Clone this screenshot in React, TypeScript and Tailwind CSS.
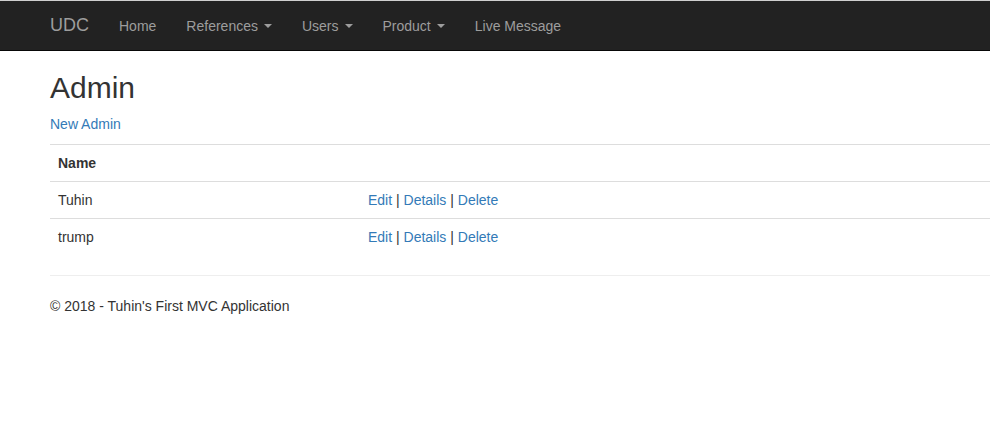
const font = "font-['Liberation_Sans',Arial,sans-serif]";

function Caret() {
  return (
    <span className="ml-[6px] inline-block h-0 w-0 border-x-[4px] border-t-[4px] border-x-transparent border-t-[#9d9d9d] align-middle" />
  );
}

const navItems = [
  { label: "Home" },
  { label: "References", caret: true },
  { label: "Users", caret: true },
  { label: "Product", caret: true },
  { label: "Live Message" },
];

const admins = ["Tuhin", "trump"];

export default function App() {
  return (
    <div className={`${font} min-h-screen w-full overflow-hidden bg-white text-[14px] leading-[20px] text-[#333]`}>
      {/* top edge line */}
      <div className="h-px bg-[#cfcfcf]" />

      {/* Navbar */}
      <nav className="h-[50px] border-b border-[#080808] bg-[#222]">
        <div className="ml-[35px] flex w-[1170px] items-center px-[15px]">
          <span className="-ml-[15px] px-[15px] py-[15px] text-[18px] leading-[19px] text-[#9d9d9d]">UDC</span>
          {navItems.map((item) => (
            <span key={item.label} className="flex items-center px-[15px] py-[14px] text-[#9d9d9d]">
              {item.label}
              {item.caret && <Caret />}
            </span>
          ))}
        </div>
      </nav>

      {/* Body */}
      <div className="ml-[35px] w-[1170px] px-[15px]">
        <h2 className="mt-[20px] mb-[10px] text-[30px] leading-[33px] font-medium">Admin</h2>
        <p className="mb-[10px]">
          <a className="text-[#337ab7]">New Admin</a>
        </p>

        <table className="mb-[20px] w-full border-collapse">
          <thead>
            <tr>
              <th className="w-[310px] border-y border-[#ddd] p-[8px] text-left font-bold">Name</th>
              <th className="border-y border-[#ddd] p-[8px]" />
            </tr>
          </thead>
          <tbody>
            {admins.map((name, i) => (
              <tr key={name}>
                <td className={`p-[8px] ${i > 0 ? "border-t border-[#ddd]" : ""}`}>{name}</td>
                <td className={`p-[8px] ${i > 0 ? "border-t border-[#ddd]" : ""}`}>
                  <a className="text-[#337ab7]">Edit</a> | <a className="text-[#337ab7]">Details</a> |{" "}
                  <a className="text-[#337ab7]">Delete</a>
                </td>
              </tr>
            ))}
          </tbody>
        </table>

        <hr className="my-[20px] border-t border-[#eee]" />
        <footer>
          <p>© 2018 - Tuhin's First MVC Application</p>
        </footer>
      </div>
    </div>
  );
}
